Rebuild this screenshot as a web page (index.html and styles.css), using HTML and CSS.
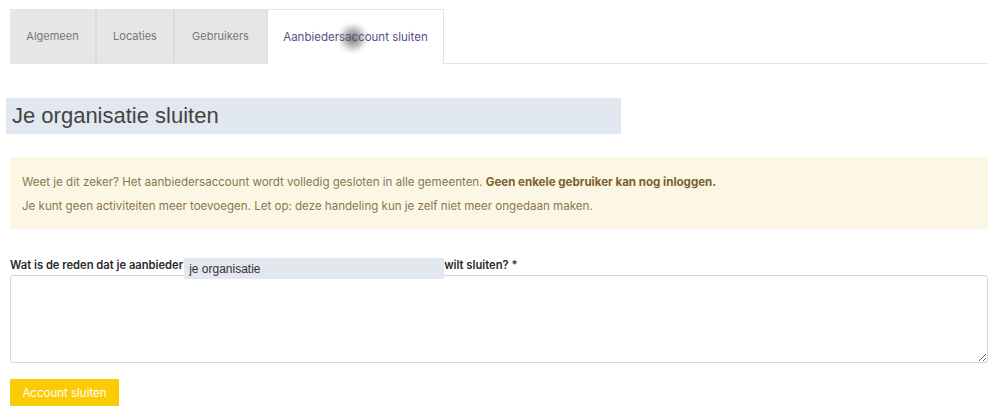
FILE: index.html
```html
<!DOCTYPE html>
<html lang="nl">
<head>
<meta charset="utf-8">
<title>Je organisatie sluiten</title>
<link rel="stylesheet" href="styles.css">
</head>
<body>
<div class="page">
  <nav class="tabs">
    <a class="tab">Algemeen</a>
    <a class="tab">Locaties</a>
    <a class="tab">Gebruikers</a>
    <a class="tab active">Aanbiedersaccount sluiten<span class="cursor"></span></a>
    <span class="tab-rest"></span>
  </nav>

  <h1 class="title">Je organisatie sluiten</h1>

  <div class="alert">
    <p>Weet je dit zeker? Het aanbiedersaccount wordt volledig gesloten in alle gemeenten. <strong>Geen enkele gebruiker kan nog inloggen.</strong></p>
    <p>Je kunt geen activiteiten meer toevoegen. Let op: deze handeling kun je zelf niet meer ongedaan maken.</p>
  </div>

  <form class="form">
    <label class="label">Wat is de reden dat je aanbieder<span class="overlay">je organisatie</span>wilt sluiten? *</label>
    <textarea class="textarea"></textarea>
    <button type="button" class="btn">Account sluiten</button>
  </form>
</div>
</body>
</html>
```

FILE: styles.css
```css
* { box-sizing: border-box; }
html, body { margin: 0; background: #fff; }
body { font-family: "Inter", "Liberation Sans", sans-serif; color: #333; }
.page { padding: 9px 15px 0 10px; }

.tabs { display: flex; align-items: stretch; height: 55px; }
.tab {
  display: flex; align-items: center; justify-content: center;
  background: #e6e6e6; color: #777; font-size: 11px;
  border-right: 2px solid #dcdcdc; border-bottom: 1px solid #e4e4e4;
  position: relative;
}
.tab:nth-child(1) { width: 87px; }
.tab:nth-child(2) { width: 78px; }
.tab:nth-child(3) { width: 93px; }
.tab.active {
  background: #fff; color: #5b4b8a; border: 1px solid #e4e4e4; border-bottom: none;
  width: 177px; margin-left: -1px; font-size: 11.5px;
}
.tab-rest { flex: 1; border-bottom: 1px solid #e4e4e4; }
.cursor {
  position: absolute; left: 70px; top: 13px; width: 30px; height: 30px;
  border-radius: 50%;
  background: radial-gradient(circle, rgba(80,80,80,0.8) 0%, rgba(110,110,110,0.45) 40%, rgba(160,160,160,0) 70%);
  filter: blur(2px);
}

.title {
  margin: 34px 0 0 -4px; width: 615px; height: 36px; padding: 0 0 0 6px;
  background: #e2e8f0; font-family: "Liberation Sans", Arial, sans-serif;
  font-weight: normal; font-size: 22px; line-height: 36px; color: #444;
}

.alert {
  margin-top: 23px; background: #fcf7e4; padding: 17px 12px 15px;
  color: #8a7650; font-size: 11.55px;
}
.alert p { margin: 0; line-height: 16px; }
.alert p + p { margin-top: 8px; }
.alert strong { font-weight: 700; color: #7a6230; }

.form { margin-top: 29px; display: flex; flex-direction: column; align-items: flex-start; }
.label { font-size: 11.2px; font-weight: 600; color: #2a2a2a; line-height: 14px; white-space: nowrap; }
.overlay {
  display: inline-block; position: relative; vertical-align: top;
  width: 260px; height: 21px; margin: 0 0 -7px 1px;
  background: #e3e8ef; color: #333; font-family: "Liberation Sans", Arial, sans-serif;
  font-weight: normal; font-size: 12px; line-height: 21px; padding: 1px 0 0 5px;
}
.textarea {
  margin-top: 3px; width: 100%; height: 88px; border: 1px solid #d6d6d6; border-radius: 3px;
  resize: vertical; font-family: inherit; background: #fff;
}
.btn {
  margin-top: 16px; width: 109px; height: 27px; border: none; background: #fccb08;
  color: #fff; font-family: "Inter", "Liberation Sans", sans-serif; font-size: 11.5px; padding: 0;
}
```
